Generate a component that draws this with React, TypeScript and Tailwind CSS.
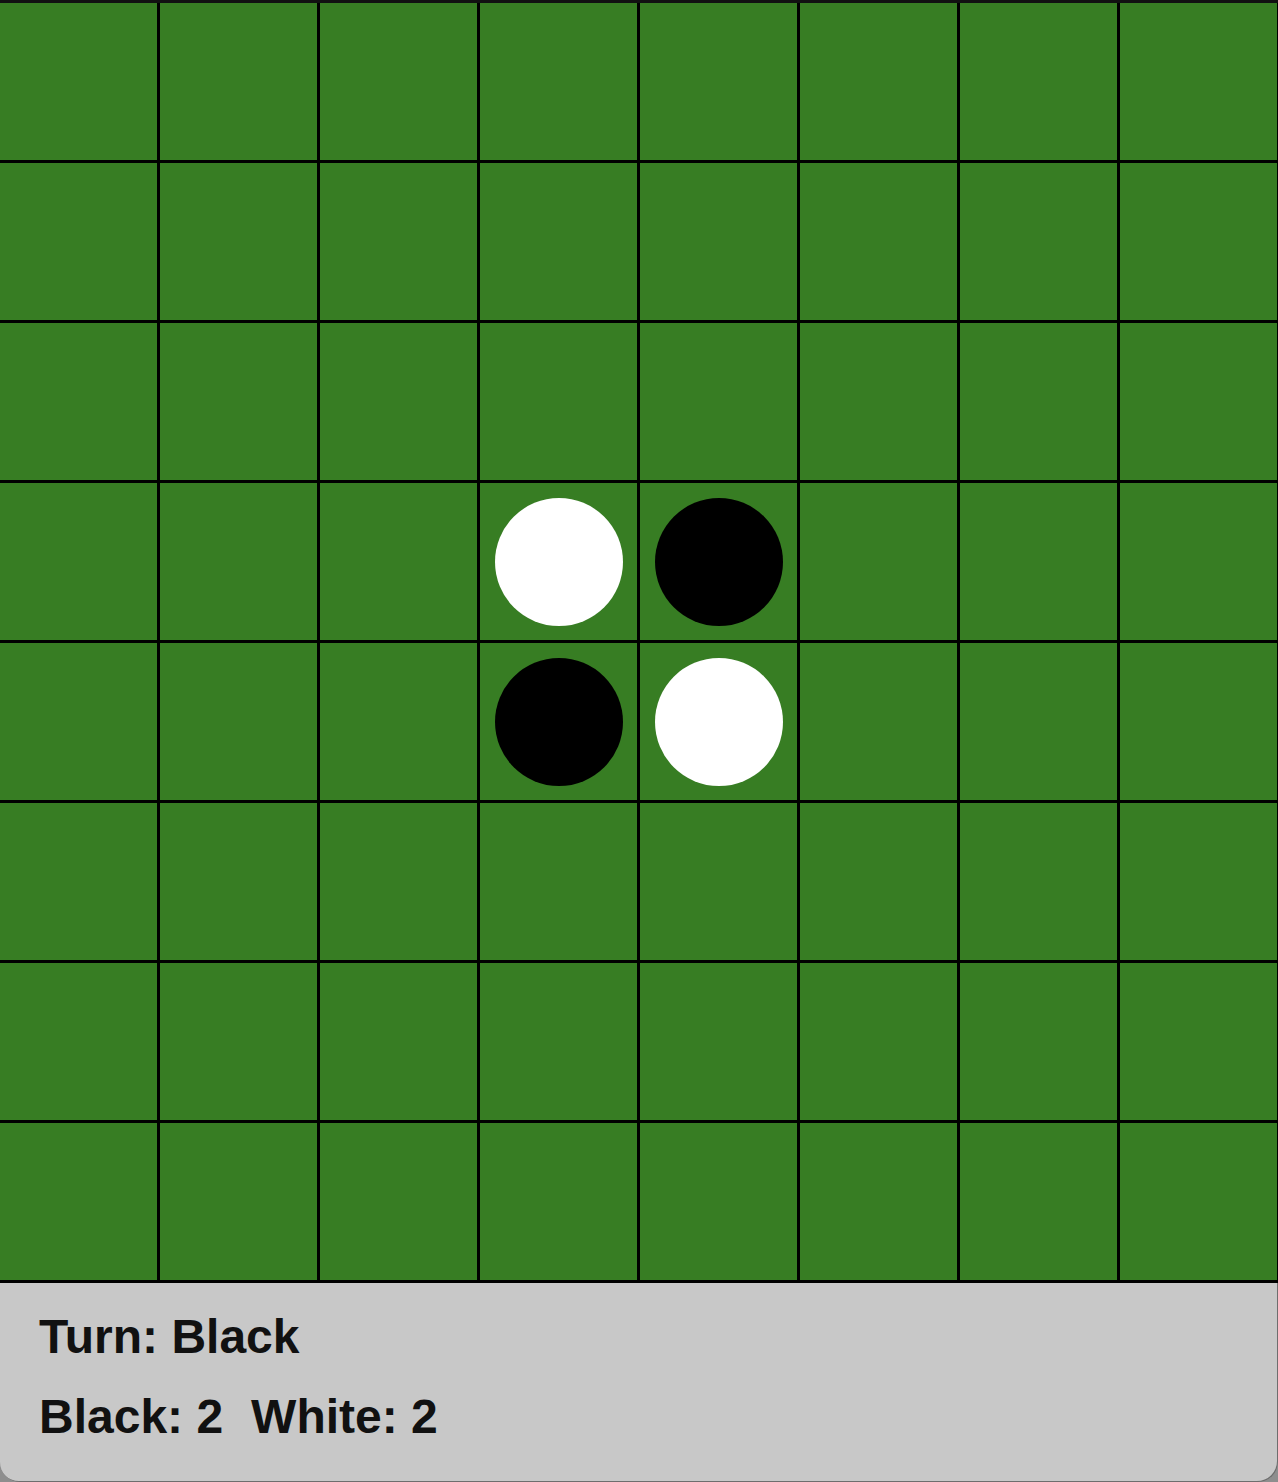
import React from 'react';

type Disc = 'black' | 'white' | null;

const SIZE = 8;

function initialBoard(): Disc[][] {
  const board: Disc[][] = Array.from({ length: SIZE }, () =>
    Array.from({ length: SIZE }, () => null as Disc),
  );
  board[3][3] = 'white';
  board[3][4] = 'black';
  board[4][3] = 'black';
  board[4][4] = 'white';
  return board;
}

export default function App() {
  const board = initialBoard();
  const blackCount = board.flat().filter((d) => d === 'black').length;
  const whiteCount = board.flat().filter((d) => d === 'white').length;

  return (
    <div
      className="h-[1482px] w-[1278px] overflow-hidden bg-[#8e8e8e]"
      style={{ fontFamily: '"Liberation Sans", Arial, sans-serif' }}
    >
      <div className="flex h-full w-full flex-col overflow-hidden rounded-b-[20px] bg-[#c8c8c8] shadow-[inset_-1px_-1px_0_rgba(0,0,0,0.45)]">
        {/* board */}
        <div className="flex w-[1280px] shrink-0 flex-col border-t-[3px] border-t-[#111] bg-[#377d23]">
          {board.map((row, r) => (
            <div key={r} className="flex h-[160px]">
              {row.map((disc, c) => (
                <div
                  key={c}
                  className="flex h-[160px] w-[160px] items-center justify-center border-r-[3px] border-b-[3px] border-black pt-[1px]"
                >
                  {disc === 'black' && (
                    <div className="h-[128px] w-[128px] rounded-full bg-black" />
                  )}
                  {disc === 'white' && (
                    <div className="h-[128px] w-[128px] rounded-full bg-white" />
                  )}
                </div>
              ))}
            </div>
          ))}
        </div>

        {/* status */}
        <div className="flex flex-col gap-[32px] pl-[39px] pt-[30px] text-[48px] font-bold leading-none text-[#111]">
          <div>Turn: Black</div>
          <div className="flex gap-[28px]">
            <span>Black: {blackCount}</span>
            <span>White: {whiteCount}</span>
          </div>
        </div>
      </div>
    </div>
  );
}
